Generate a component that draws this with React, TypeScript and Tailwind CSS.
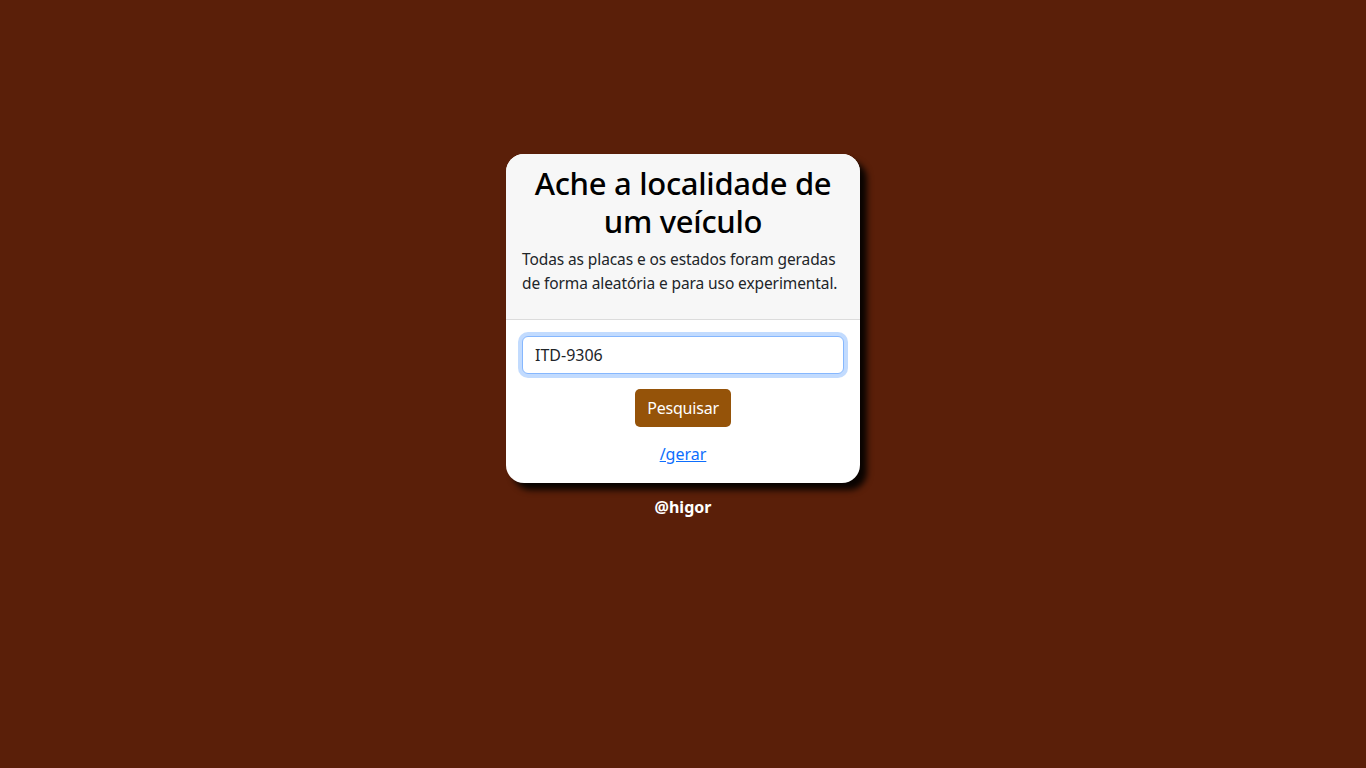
import React from "react";

export default function App() {
  return (
    <div
      className="min-h-screen w-full bg-[#5a1f09] flex flex-col items-center pt-[154px]"
      style={{ fontFamily: '"Noto Sans", "Open Sans", sans-serif' }}
    >
      <div className="w-[354px] bg-white rounded-[18px] overflow-hidden shadow-[7px_7px_6px_rgba(0,0,0,0.9)]">
        <div className="bg-[#f7f7f7] border-b border-[#dcdcdc] px-4 pt-[10px] pb-2 text-center">
          <h1 className="text-[31px] leading-[38px] font-medium text-black tracking-[-0.3px] mb-[7px]">
            Ache a localidade de um veículo
          </h1>
          <p className="text-[15.5px] leading-6 text-[#212529] text-left mb-4 tracking-[-0.1px]">
            Todas as placas e os estados foram geradas de forma aleatória e para uso experimental.
          </p>
        </div>
        <div className="px-4 pt-4 pb-[17px] flex flex-col items-center">
          <input
            className="w-full h-[38px] px-3 text-[16px] text-[#212529] bg-white border border-[#86b7fe] rounded-[6px] outline-none shadow-[0_0_0_4px_rgba(13,110,253,0.25)]"
            defaultValue="ITD-9306"
          />
          <button className="mt-[15px] h-[38px] px-3 rounded-[5px] bg-[#955309] text-white text-[16px] tracking-[-0.2px]">
            Pesquisar
          </button>
          <a href="#" className="mt-[15px] text-[16px] leading-6 text-[#0d6efd] underline">
            /gerar
          </a>
        </div>
      </div>
      <div className="mt-[12px] text-white font-bold text-[16px] leading-6">@higor</div>
    </div>
  );
}
